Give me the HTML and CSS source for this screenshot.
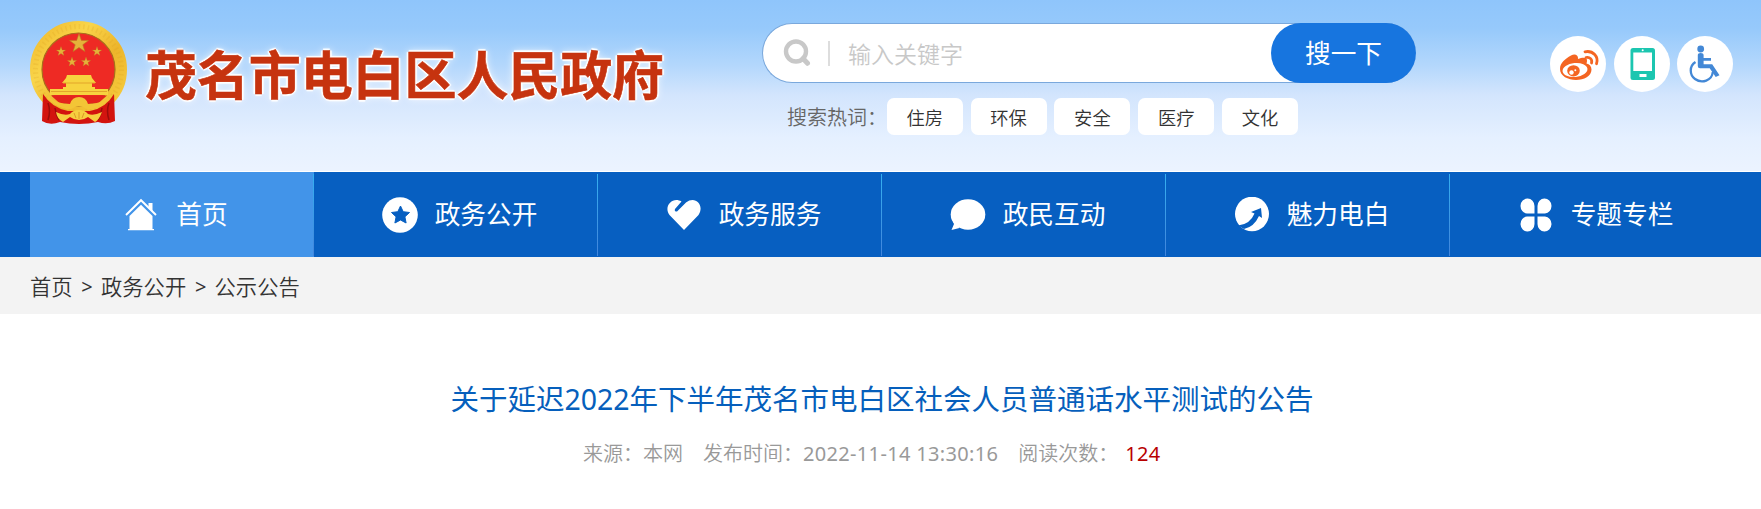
FILE: index.html
```html
<!DOCTYPE html>
<html lang="zh-CN">
<head>
  <meta charset="UTF-8">
  <meta name="viewport" content="width=device-width, initial-scale=1.0">
  <title>茂名市电白区人民政府</title>
  <link rel="stylesheet" href="styles.css">
</head>
<body>
  <!-- Header: logo, search, shortcuts -->
  <header class="header">
    <a class="logo">
      <svg class="emblem" viewBox="0 0 98 104">
        <defs>
          <linearGradient id="gold" x1="0" y1="0" x2="1" y2="1">
            <stop offset="0" stop-color="#f0b92c"/>
            <stop offset="0.3" stop-color="#f9d54a"/>
            <stop offset="0.6" stop-color="#edb52b"/>
            <stop offset="1" stop-color="#f7cf3f"/>
          </linearGradient>
          <path id="star" d="M0-10 2.4-3.1 9.5-3.1 3.8 1.2 5.9 8.1 0 4-5.9 8.1-3.8 1.2-9.5-3.1-2.4-3.1z"/>
        </defs>
        <circle cx="48.500" cy="48.500" r="42" fill="#ee2a24"/>
        <circle cx="48.500" cy="48.500" r="42.500" fill="none" stroke="url(#gold)" stroke-width="12"/>
        <circle cx="48.500" cy="48.500" r="36.500" fill="none" stroke="#a86d1c" stroke-width="1.200"/>
        <circle cx="48.500" cy="48.500" r="43" fill="none" stroke="#d99a20" stroke-width="5" stroke-dasharray="1.500 3" opacity=".2"/>
        <path d="M13 73q9 14 25 17h22q16-3 24-17l1 27q-8 4-17 1-19 4-38 0-10 4-18-1z" fill="#d3140f"/>
        <path d="M18 82q3 8 0 17M25 87q1 7 4 12M79 82q-3 8 0 17M72 87q-1 7-4 12" fill="none" stroke="#9c0c0a" stroke-width="1.500"/>
        <g fill="#e5b23a" stroke="#b9781f" stroke-width=".6">
          <use href="#star" transform="translate(49 22.500)"/>
          <use href="#star" transform="translate(31 30.500) scale(.5)"/>
          <use href="#star" transform="translate(67 30.500) scale(.5)"/>
          <use href="#star" transform="translate(42 41) scale(.5)"/>
          <use href="#star" transform="translate(56 41) scale(.5)"/>
        </g>
        <path d="M37 54h24l1 3 4 5H32l4-5zM36 62h26v4h3v2h13v6H20v-6h13v-2h3z" fill="#f7d33f"/>
        <path d="M33 62h32M21 70.500h56" stroke="#e3a52b" stroke-width="1"/>
        <path d="M21 74.500h56l-9 8H30z" fill="#e4241c"/>
        <path d="M16 74q10 9 24 9 2-7 9-7t9 7q14 0 24-9-6 11-20 14-5 1-9-2-4-2-8 0-4 3-9 2-14-3-20-14z" fill="#f3c536"/>
        <path d="M26 91q8 4 14 2 3-4 9-4t9 4q6 2 14-2-3 8-7 10l-7-5q-4 3-9 3t-9-3l-7 5q-6-3-7-10z" fill="#f6cf40"/>
        <path d="M49 91v7M44 92l2 5M54 92l-2 5" stroke="#dc9a26" stroke-width="1"/>
      </svg>
      <span class="site-name">茂名市电白区人民政府</span>
    </a>

    <div class="search">
      <div class="search-box">
        <svg class="search-icon" viewBox="0 0 28 28">
          <circle cx="13" cy="12.500" r="10" fill="none" stroke="#c8c8c8" stroke-width="4.400"/>
          <path d="M20 19.500l4.500 4.800" stroke="#c8c8c8" stroke-width="5" stroke-linecap="round"/>
        </svg>
        <span class="search-line"></span>
        <span class="placeholder">输入关键字</span>
        <div class="search-button">搜一下</div>
      </div>
      <div class="hot-words">
        <span class="hot-label">搜索热词：</span>
        <a class="hot-word">住房</a>
        <a class="hot-word">环保</a>
        <a class="hot-word">安全</a>
        <a class="hot-word">医疗</a>
        <a class="hot-word">文化</a>
      </div>
    </div>

    <div class="shortcuts">
      <a class="shortcut">
        <svg viewBox="0 0 56 56">
          <path d="M10 33c0-6 5-10 11-13.500 4-2 7.500-.5 7 3.500 5-2 9.500-2 9 2 0 1.200-.5 2-.5 2.500 3 .6 5 3 5 6C41.500 40 34 44 26 44S10 40 10 33z" fill="#f46522"/>
          <ellipse cx="25" cy="34" rx="12.500" ry="7" fill="#fff" transform="rotate(-6 25 34)"/>
          <ellipse cx="23.500" cy="34.800" rx="6.300" ry="5.600" fill="#f46522"/>
          <circle cx="21.500" cy="36.500" r="2.200" fill="#fff"/>
          <circle cx="25.300" cy="34.200" r="1" fill="#fff"/>
          <path d="M35 15.800c8-1.600 14 5 11.500 12M36 21.500c4-.8 6.500 2 5.500 5.500" fill="none" stroke="#f46522" stroke-width="2.800" stroke-linecap="round"/>
        </svg>
      </a>
      <a class="shortcut">
        <svg viewBox="0 0 56 56">
          <rect x="16.500" y="12" width="24.500" height="32" rx="2.500" fill="#1cc6b0"/>
          <path d="M19.300 16.500h18.700V35H19.300zM25.500 38h7v3h-7z" fill="#fff"/>
          <circle cx="28.700" cy="14.300" r="1" fill="#fff"/>
        </svg>
      </a>
      <a class="shortcut">
        <svg viewBox="0 0 56 56" fill="#4388d6">
          <circle cx="23.700" cy="13" r="3.400"/>
          <path d="M20.800 19q0-2 2.900-2t2.900 2v3H34v2.800h-7.400v3.400h8.600l7.300 11-3.800 1.800-6-8.800H23q-2.200 0-2.200-2.200z"/>
          <path d="M18.500 26C12 30 12.500 39 18 43c7 5 17 1.500 17.800-7" fill="none" stroke="#4388d6" stroke-width="2.300"/>
        </svg>
      </a>
    </div>
  </header>

  <!-- Main navigation -->
  <nav class="nav">
    <a class="nav-item active">
      <svg class="nav-icon" viewBox="0 0 36 36">
        <path d="M3 18 18 3.200 33 18" fill="none" stroke="#fff" stroke-width="1.900"/>
        <path d="M25.500 6h4v9l-4-4zM18 7.800 29.500 19v13H31v1.300H5V32h1.500V19z" fill="#fff"/>
      </svg>
      <span>首页</span>
    </a>
    <a class="nav-item">
      <svg class="nav-icon" viewBox="0 0 36 36">
        <circle cx="18" cy="18" r="17.800" fill="#fff"/>
        <path d="M18.500 9l2.700 5.700 6.300.8-4.600 4.300 1.200 6.200-5.600-3-5.600 3 1.200-6.200-4.600-4.300 6.300-.8z" fill="#075fc1" stroke="#075fc1" stroke-linejoin="round"/>
      </svg>
      <span>政务公开</span>
    </a>
    <a class="nav-item">
      <svg class="nav-icon" viewBox="0 0 36 36">
        <path d="M18 33 3.500 18C-3 9 7-1 15.500 4.500L9 12q-1 3 2 2.500L20 5.500C29-2 39 8 32.500 18z" fill="#fff"/>
      </svg>
      <span>政务服务</span>
    </a>
    <a class="nav-item">
      <svg class="nav-icon" viewBox="0 0 36 36">
        <ellipse cx="18" cy="17.500" rx="17.300" ry="15.200" fill="#fff"/>
        <path d="M2 22l2 5-2.500 6 8-2z" fill="#fff"/>
      </svg>
      <span>政民互动</span>
    </a>
    <a class="nav-item">
      <svg class="nav-icon" viewBox="0 0 36 36">
        <ellipse cx="18" cy="17" rx="17" ry="17.300" fill="#fff"/>
        <path d="M4 28.500q12-1 16.500-12L17 15l10-4 1 10-3-2Q20 30 10 32z" fill="#075fc1"/>
      </svg>
      <span>魅力电白</span>
    </a>
    <a class="nav-item">
      <svg class="nav-icon" viewBox="0 0 36 36" fill="#fff">
        <path d="M16.500 16.500H9A7 7.500 0 1 1 16.500 9zM19.500 16.500H27A7 7.500 0 1 0 19.500 9zM16.500 19.500H9A7 7.500 0 1 0 16.500 27zM19.500 19.500H27A7 7.500 0 1 1 19.500 27z"/>
      </svg>
      <span>专题专栏</span>
    </a>
  </nav>

  <div class="breadcrumb">
    <a>首页</a>
    <span class="arrow">&gt;</span>
    <a>政务公开</a>
    <span class="arrow">&gt;</span>
    <a>公示公告</a>
  </div>

  <!-- Article -->
  <main class="article">
    <h1 class="title">关于延迟2022年下半年茂名市电白区社会人员普通话水平测试的公告</h1>
    <div class="meta">
      <span>来源：本网</span>
      <span>发布时间：<span class="date">2022-11-14 13:30:16</span></span>
      <span>阅读次数：</span>
      <span class="count">124</span>
    </div>
  </main>
</body>
</html>
```
FILE: styles.css
```css
* {
  box-sizing: border-box;
}
body {
  margin: 0;
  background-color: #fff;
  color: #333;
  font-family: "Noto Sans", "Noto Sans CJK SC", sans-serif;
  white-space: nowrap;
}
svg {
  display: block;
}
/* Header */
.header {
  display: flex;
  align-items: flex-start;
  height: 172px;
  padding-left: 30px;
  background: linear-gradient(#8fc5fb 0, #96c9fb 28px, #b3d7fc 65px, #d3e5fd 95px, #e5f0ff 138px, #ebf3ff 168px);
  border-bottom: 1px solid #fff;
}
.logo {
  display: flex;
  width: 732px;
  padding-top: 21px;
}
.emblem {
  width: 98px;
  height: 104px;
}
.site-name {
  margin: 14px 0 0 17px;
  color: #c6330f;
  font-family: "Noto Sans CJK SC", sans-serif;
  font-size: 52px;
  font-weight: 700;
  line-height: 76px;
  letter-spacing: -0.1px;
  -webkit-text-stroke: 0.6px #c6330f;
  text-shadow: 2px 0 1px #fff, -2px 0 1px #fff, 0 2px 1px #fff, 0 -2px 1px #fff, 0 0 8px #fff;
}
/* Search */
.search {
  width: 654px;
  padding-top: 23px;
}
.search-box {
  display: flex;
  align-items: center;
  height: 60px;
  padding-left: 20px;
  border: 1px solid #7aa8dc;
  border-right: 0;
  border-radius: 30px;
  background-color: #fff;
}
.search-icon {
  width: 28px;
  height: 28px;
}
.search-line {
  width: 2px;
  height: 25px;
  margin: 0 18px 0 17px;
  background-color: #ddd;
}
.placeholder {
  color: #c8c8c8;
  font-size: 23px;
  font-weight: 350;
}
.search-button {
  width: 145px;
  height: 60px;
  margin-left: auto;
  border-radius: 30px;
  background-color: #1775df;
  color: #fff;
  font-size: 25.700px;
  line-height: 61px;
  text-align: center;
}
.hot-words {
  display: flex;
  gap: 7.800px;
  margin: 15px 0 0 25px;
  font-size: 18.300px;
  font-weight: 350;
  line-height: 39px;
}
.hot-label {
  width: 92px;
  color: #666;
  font-size: 20px;
}
.hot-word {
  width: 76px;
  height: 37px;
  border-radius: 7px;
  background-color: #fff;
  text-align: center;
}
/* Round shortcut icons */
.shortcuts {
  display: flex;
  gap: 7.700px;
  margin: 36px 0 0 134px;
}
.shortcut {
  width: 56px;
  height: 56px;
  border-radius: 50%;
  background-color: #fff;
}
/* Navigation */
.nav {
  display: flex;
  height: 85px;
  padding: 0 27px 0 30px;
  background-color: #075fc1;
}
.nav-item {
  display: flex;
  flex: 1;
  align-items: center;
  justify-content: center;
  gap: 17px;
  padding-left: 7px;
  background: linear-gradient(#35b0f0, #4285dc) right 2px / 1px 82px no-repeat;
  color: #fff;
  font-size: 25.700px;
  line-height: 36px;
}
.nav-item:last-child {
  background: none;
}
.nav-item.active {
  background-color: #4294e9;
}
.nav-icon {
  width: 36px;
  height: 36px;
}
/* Breadcrumb */
.breadcrumb {
  display: flex;
  gap: 8.700px;
  height: 57px;
  padding-left: 30px;
  background-color: #f3f3f3;
  font-size: 21.300px;
  font-weight: 350;
  line-height: 60px;
}
.arrow {
  width: 11px;
  font-size: 20px;
  font-weight: 400;
}
/* Article */
.article {
  padding-top: 62px;
  text-align: center;
}
.title {
  margin: 0;
  padding-left: 3px;
  color: #065fbc;
  font-size: 28.500px;
  font-weight: 400;
  line-height: 46px;
}
.meta {
  display: flex;
  gap: 20px;
  margin: 11px 0 0 583px;
  color: #999;
  font-size: 20px;
  font-weight: 350;
  line-height: 41px;
}
.date {
  font-weight: 400;
  letter-spacing: 0.330px;
}
.count {
  margin-left: -13px;
  color: #b80000;
  font-weight: 400;
  letter-spacing: 0.300px;
}
```
